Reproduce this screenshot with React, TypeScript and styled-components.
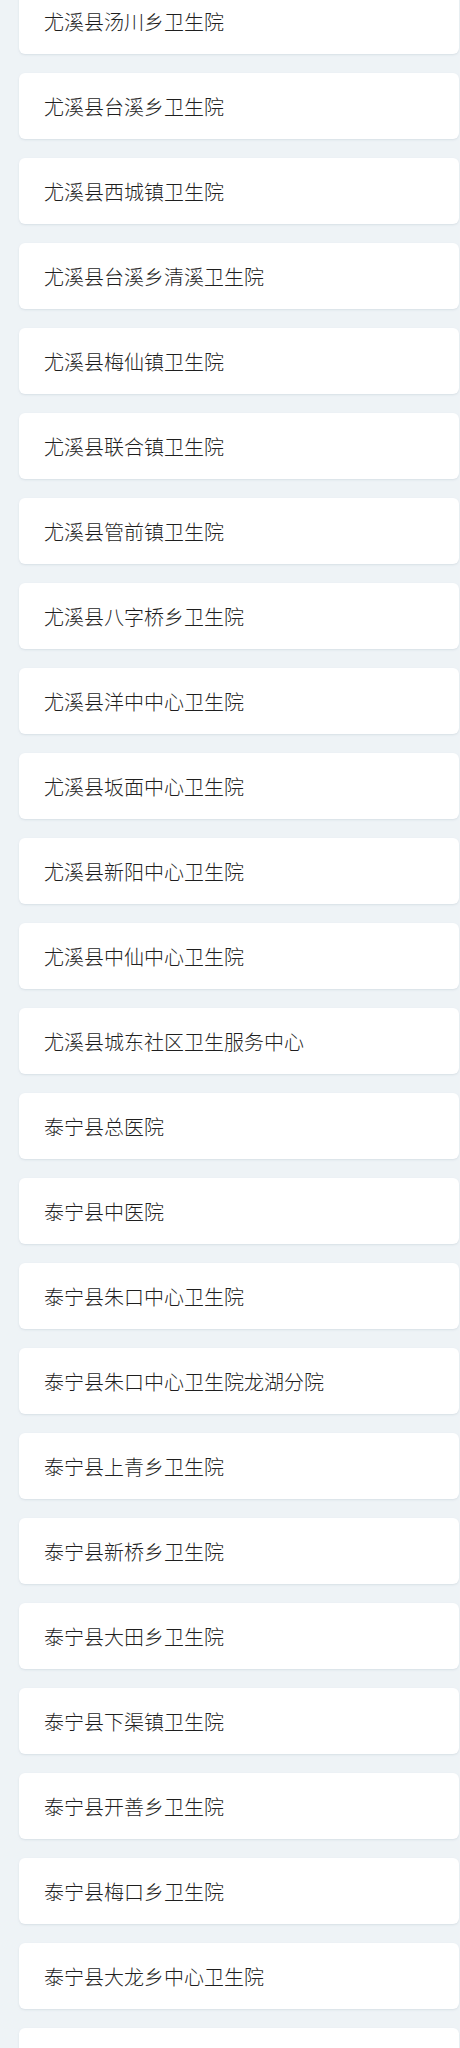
import React from "react";
import styled, { createGlobalStyle } from "styled-components";

const Global = createGlobalStyle`
  html, body { margin: 0; padding: 0; background: #eef3f6; }
  body { font-family: "Noto Sans CJK SC", "Noto Sans", sans-serif; }
`;

const List = styled.div`
  display: flex;
  flex-direction: column;
  gap: 19px;
  margin-top: -12px;
  padding: 0 1px 0 19px;
`;

const Card = styled.div`
  height: 66px;
  background: #ffffff;
  border-radius: 6px;
  box-shadow: 0 1px 2px rgba(200, 210, 218, 0.6);
  display: flex;
  align-items: center;
  padding-left: 25px;
  font-size: 20px;
  font-weight: 300;
  color: #1f1f1f;
  box-sizing: border-box;
`;

const names = [
  "尤溪县汤川乡卫生院",
  "尤溪县台溪乡卫生院",
  "尤溪县西城镇卫生院",
  "尤溪县台溪乡清溪卫生院",
  "尤溪县梅仙镇卫生院",
  "尤溪县联合镇卫生院",
  "尤溪县管前镇卫生院",
  "尤溪县八字桥乡卫生院",
  "尤溪县洋中中心卫生院",
  "尤溪县坂面中心卫生院",
  "尤溪县新阳中心卫生院",
  "尤溪县中仙中心卫生院",
  "尤溪县城东社区卫生服务中心",
  "泰宁县总医院",
  "泰宁县中医院",
  "泰宁县朱口中心卫生院",
  "泰宁县朱口中心卫生院龙湖分院",
  "泰宁县上青乡卫生院",
  "泰宁县新桥乡卫生院",
  "泰宁县大田乡卫生院",
  "泰宁县下渠镇卫生院",
  "泰宁县开善乡卫生院",
  "泰宁县梅口乡卫生院",
  "泰宁县大龙乡中心卫生院",
  "",
];

export default function App() {
  return (
    <>
      <Global />
      <List>
        {names.map((n, i) => (
          <Card key={i}>{n}</Card>
        ))}
      </List>
    </>
  );
}
